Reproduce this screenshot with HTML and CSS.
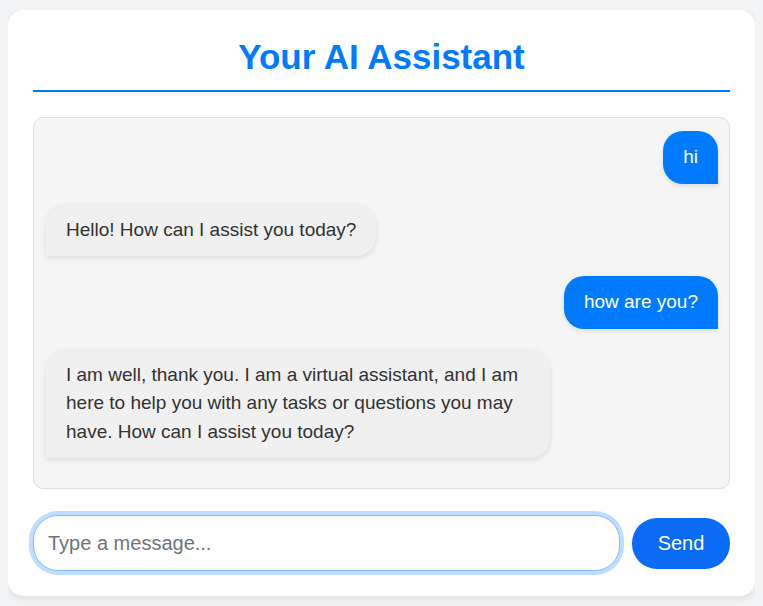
FILE: index.html
```html
<!DOCTYPE html>
<html lang="en">
<head>
<meta charset="utf-8">
<title>Your AI Assistant</title>
<link rel="stylesheet" href="styles.css">
</head>
<body>
<div class="card">
  <h1 class="title">Your AI Assistant</h1>
  <div class="chat">
    <div class="msg user">hi</div>
    <div class="msg bot">Hello! How can I assist you today?</div>
    <div class="msg user">how are you?</div>
    <div class="msg bot">I am well, thank you. I am a virtual assistant, and I am here to help you with any tasks or questions you may have. How can I assist you today?</div>
  </div>
  <div class="composer">
    <input class="input" type="text" placeholder="Type a message...">
    <button class="send">Send</button>
  </div>
</div>
</body>
</html>
```

FILE: styles.css
```css
* { box-sizing: border-box; }

html, body { height: 100%; }

body {
  margin: 10px 8px 8px;
  background: #f3f4f6;
  font-family: "Liberation Sans", Arial, sans-serif;
}

.card {
  background: #ffffff;
  border-radius: 15px;
  box-shadow: 0 2px 10px rgba(0, 0, 0, 0.1);
  padding: 27px 25px 25px;
}

.title {
  margin: 0 0 25px;
  padding-bottom: 13px;
  border-bottom: 2px solid #007bff;
  color: #007bff;
  font-size: 35px;
  line-height: 40px;
  font-weight: bold;
  text-align: center;
}

.chat {
  height: 372px;
  background: #f5f5f5;
  border: 1px solid #dddddd;
  border-radius: 10px;
  padding: 13px 11px 12px 12px;
  display: flex;
  flex-direction: column;
  gap: 20px;
  overflow: hidden;
}

.msg {
  max-width: 75%;
  padding: 12px 20px;
  font-size: 19px;
  line-height: 28.5px;
  border-radius: 20px;
  box-shadow: 0 2px 5px rgba(0, 0, 0, 0.1);
}

.user {
  align-self: flex-end;
  background: #007bff;
  color: #ffffff;
  border-bottom-right-radius: 0;
}

.bot {
  align-self: flex-start;
  background: #f0f0f0;
  color: #333333;
  border-bottom-left-radius: 0;
}

.composer {
  margin-top: 26px;
  display: flex;
  align-items: center;
  gap: 12px;
}

.input {
  flex: 1;
  height: 56px;
  padding: 0 14px;
  font-family: "Liberation Sans", Arial, sans-serif;
  font-size: 20px;
  color: #333;
  background: #fff;
  border: 1px solid #86b7fe;
  border-radius: 25px;
  box-shadow: 0 0 0 4px rgba(0, 123, 255, 0.25);
  outline: none;
}

.input::placeholder { color: #6c757d; }

.send {
  width: 98px;
  height: 51px;
  padding: 0;
  border: none;
  border-radius: 25px;
  background: #0a6cf5;
  color: #ffffff;
  font-family: "Liberation Sans", Arial, sans-serif;
  font-size: 20px;
  cursor: pointer;
}
```
